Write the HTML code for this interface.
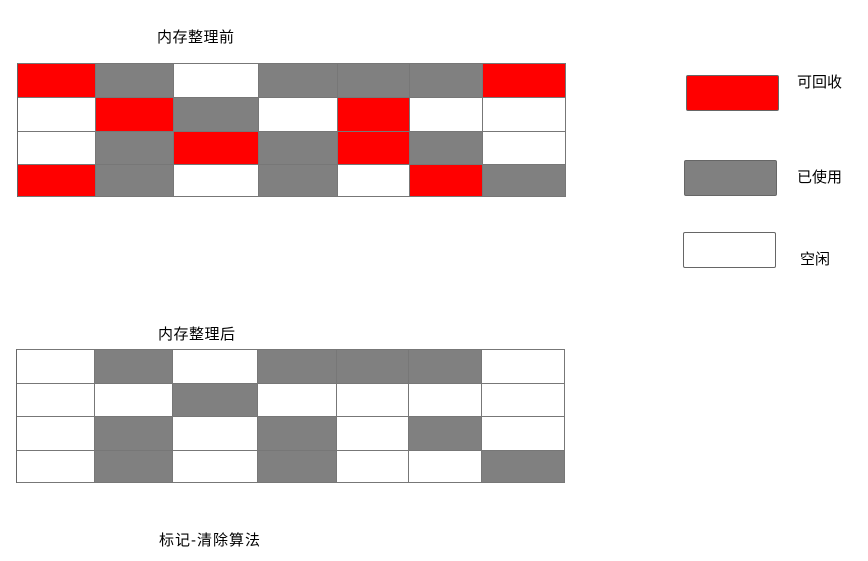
<!DOCTYPE html>
<html><head><meta charset="utf-8"><style>
body{margin:0;width:868px;height:561px;background:#fff;position:relative;overflow:hidden;font-family:"Liberation Sans","Noto Sans CJK SC",sans-serif;font-size:15px;color:#000}
.t{position:absolute;white-space:nowrap;line-height:1}
.g{position:absolute;display:grid;grid-template-columns:78px 78px 85px 79px 72px 73px 83px;border-left:1px solid #666;border-top:1px solid #777}
.g div{box-sizing:border-box;border-right:1px solid #777;border-bottom:1px solid #777}
.R{background:#f00}.G{background:#808080}.W{background:#fff}
.l{position:absolute;box-sizing:border-box;border:1px solid #666;border-radius:2px}
</style></head><body>
<div class="t" style="left:157px;top:30px;letter-spacing:0.5px">内存整理前</div>
<div class="g" style="left:17px;top:63px;grid-template-rows:34px 34px 33px 32px">
<div class="R"></div><div class="G"></div><div class="W"></div><div class="G"></div><div class="G"></div><div class="G"></div><div class="R"></div>
<div class="W"></div><div class="R"></div><div class="G"></div><div class="W"></div><div class="R"></div><div class="W"></div><div class="W"></div>
<div class="W"></div><div class="G"></div><div class="R"></div><div class="G"></div><div class="R"></div><div class="G"></div><div class="W"></div>
<div class="R"></div><div class="G"></div><div class="W"></div><div class="G"></div><div class="W"></div><div class="R"></div><div class="G"></div>
</div>
<div class="t" style="left:158px;top:327px;letter-spacing:0.5px">内存整理后</div>
<div class="g" style="left:16px;top:349px;grid-template-rows:34px 33px 34px 32px">
<div class="W"></div><div class="G"></div><div class="W"></div><div class="G"></div><div class="G"></div><div class="G"></div><div class="W"></div>
<div class="W"></div><div class="W"></div><div class="G"></div><div class="W"></div><div class="W"></div><div class="W"></div><div class="W"></div>
<div class="W"></div><div class="G"></div><div class="W"></div><div class="G"></div><div class="W"></div><div class="G"></div><div class="W"></div>
<div class="W"></div><div class="G"></div><div class="W"></div><div class="G"></div><div class="W"></div><div class="W"></div><div class="G"></div>
</div>
<div class="t" style="left:159px;top:533px;letter-spacing:1px">标记-清除算法</div>
<div class="l" style="left:686px;top:75px;width:93px;height:36px;background:#f00"></div>
<div class="l" style="left:684px;top:160px;width:93px;height:36px;background:#808080"></div>
<div class="l" style="left:683px;top:232px;width:93px;height:36px;background:#fff"></div>
<div class="t" style="left:797px;top:75px">可回收</div>
<div class="t" style="left:797px;top:170px">已使用</div>
<div class="t" style="left:800px;top:252px">空闲</div>
</body></html>
